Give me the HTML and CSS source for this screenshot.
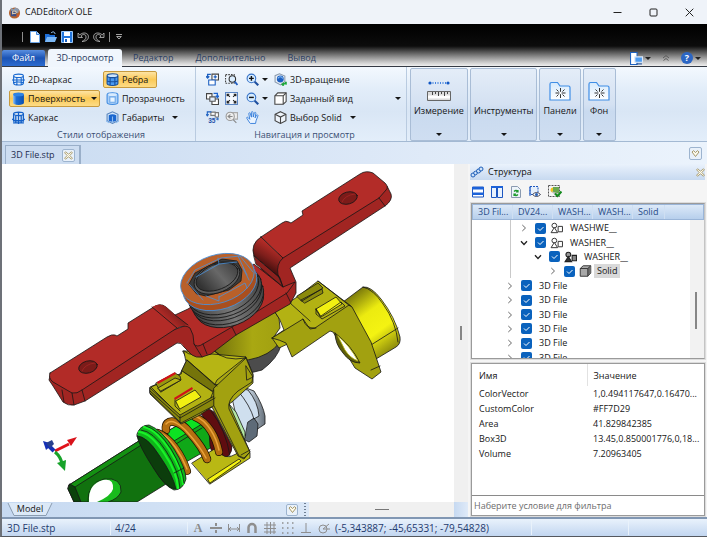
FILE: index.html
```html
<!DOCTYPE html>
<html lang="ru">
<head>
<meta charset="utf-8">
<title>CADEditorX OLE</title>
<link rel="stylesheet" href="styles.css">
</head>
<body>
<svg class="defs" aria-hidden="true">
  <defs>
    <linearGradient id="blueFill" x1="0" x2="1"><stop offset="0" stop-color="#8fc1f5"/><stop offset=".3" stop-color="#1d6fd6"/><stop offset="1" stop-color="#0a4fb0"/></linearGradient>
    <linearGradient id="folderFill" x1="0" y1="0" x2="0" y2="1"><stop offset="0" stop-color="#d6eafc"/><stop offset="1" stop-color="#fff"/></linearGradient>
    <symbol id="cyl-wire" viewBox="0 0 12 12"><path d="M1.500 2.500v7c0 .9 2 1.600 4.500 1.600s4.500-.7 4.500-1.600v-7M1.500 2.500C1.500 1.600 3.500 1 6 1s4.500.6 4.500 1.500S8.500 4.200 6 4.200 1.500 3.400 1.500 2.500M4.500 4v7M8.500 4v7M0 6.500h12M1.500 9.200C3 8 9 8 10.500 9.200" fill="none" stroke="#1667cf"/></symbol>
    <symbol id="cyl-dense" viewBox="0 0 12 12"><path d="M1.500 2.500v7.500M3.500 4v7.500M6 1v11M8.500 4v7.500M10.500 2.500v7.500M1.500 2.500C1.500 1.600 3.500 1 6 1s4.500.6 4.500 1.500S8.500 4.200 6 4.200 1.500 3.400 1.500 2.500M0 7.500l3 1.500h6l3-1.500M1 11h10" fill="none" stroke="#1360c8" stroke-width="1.200"/></symbol>
    <symbol id="cyl-edge" viewBox="0 0 12 12"><path d="M1 2.500v7.300C1 11 3 11.500 6 11.500s5-.5 5-1.700V2.500z" fill="#4b9af0"/><ellipse cx="6" cy="2.400" rx="5" ry="1.800" fill="#cfe6fb"/><path d="M1 2.500v7.300C1 11 3 11.500 6 11.500s5-.5 5-1.700V2.500M1 2.500C1 1.400 3 .7 6 .7s5 .7 5 1.800-2 1.800-5 1.800-5-.7-5-1.800M3.800 4.200v7M8.200 4.200v7M1 7.300c3 1 7 1 10 0" fill="none" stroke="#164f9c"/></symbol>
    <symbol id="cyl-solid" viewBox="0 0 12 12"><path d="M1 2.200v7.800C1 11.200 3 12 6 12s5-.8 5-2V2.200z" fill="url(#blueFill)"/><ellipse cx="6" cy="2.200" rx="5" ry="1.700" fill="#2f83e3"/></symbol>
    <symbol id="cyl-glass" viewBox="0 0 12 12"><path d="M1 2.500v7C1 10.700 3 11.500 6 11.500s5-.8 5-2v-7C11 1.400 9 .7 6 .7S1 1.400 1 2.500z" fill="#a9cff8" stroke="#3f8be0"/><path d="M3.500 4.500h5v5h-5z" fill="#e8f4ff" stroke="#6ba6e8"/><ellipse cx="6" cy="2.500" rx="4" ry="1.300" fill="#d9ebfd"/></symbol>
    <symbol id="bounds" viewBox="0 0 12 12"><path d="M1 3l5-2.200L11 3v6l-5 2.500L1 9z" fill="#d5e8fb" stroke="#5a86bd"/><path d="M2.500 4q3.500-2 7 0v5q-3.500 2-7 0z" fill="#1a66cf"/><path d="M6 5v6M0 9l3 2M12 9l-3 2" stroke="#8dbcf0" fill="none"/></symbol>
    <symbol id="rot-a" viewBox="0 0 12 12"><path d="M5.500 1h6v5.500h-6z" fill="#fff" stroke="#444"/><path d="M2.500 6.500h6v4.500h-6z" fill="#fff" stroke="#1c5fc0"/><path d="M4.500 1.200H1.500V4M0 3l1.500 1.600L3 3M8.500 2v3M10 3.500H7" fill="none" stroke="#1c5fc0" stroke-width="1.200"/></symbol>
    <symbol id="rot-b" viewBox="0 0 12 12"><path d="M.5 1.500h5v5h-5zM5.500 6.500h6v5h-6z" fill="#fff" stroke="#444"/><path d="M3.500 4.500h5v4h-5z" fill="#e4f0fd" stroke="#555"/><path d="M7 1.200h3.500V4M9 3.500l1.500 1.600L12 3.500" fill="none" stroke="#1c64d0" stroke-width="1.200"/></symbol>
    <symbol id="rot-c" viewBox="0 0 12 12"><path d="M4.500 1h4v3h-4zM8.500 1.500h3v4h-3z" fill="#fff" stroke="#777"/><path d="M5 .8H1.200V4M0 3l1.200 1.500L2.500 3M11 6.500v2" fill="none" stroke="#1c5fc0"/><text x="2" y="11.500" class="deg">35°</text></symbol>
    <symbol id="zoom-win" viewBox="0 0 12 12"><path d="M.5 1.500h8v8h-8z" fill="none" stroke="#444" stroke-dasharray="1.500 1"/><circle cx="6.800" cy="5.500" r="3" fill="#dbeeff" stroke="#333"/><path d="M9 8l2.500 3" stroke="#1e5cc0" stroke-width="1.600"/></symbol>
    <symbol id="zoom-fit" viewBox="0 0 12 12"><path d="M.5.500h11v11H.5z" fill="#f4f8fe" stroke="#5c86c4"/><path d="M2.200 2.200l2.300 2.300M9.800 2.200L7.500 4.500M2.200 9.800l2.300-2.300M9.800 9.800L7.500 7.500M2 4V2h2M8 2h2v2M2 8v2h2M8 10h2V8" fill="none" stroke="#222"/></symbol>
    <symbol id="zoom-prev" viewBox="0 0 12 12"><path d="M6.500 1.500h5v6h-5z" fill="#eee" stroke="#aaa"/><circle cx="4.800" cy="5" r="3.800" fill="#eee" stroke="#999"/><path d="M2.500 5h4.500M5 3.200L2.800 5 5 6.800M7.500 8l3 3" fill="none" stroke="#888"/></symbol>
    <symbol id="zoom-in" viewBox="0 0 12 12"><circle cx="5" cy="5" r="4" fill="#d6ecff" stroke="#3471c8"/><path d="M2.800 5h4.400M5 2.800v4.400" stroke="#111" stroke-width="1.300"/><path d="M8 8l3.300 3.300" stroke="#1e4f9e" stroke-width="2"/></symbol>
    <symbol id="zoom-out" viewBox="0 0 12 12"><circle cx="5" cy="5" r="4" fill="#d6ecff" stroke="#3471c8"/><path d="M2.800 5h4.400" stroke="#111" stroke-width="1.300"/><path d="M8 8l3.300 3.300" stroke="#1e4f9e" stroke-width="2"/></symbol>
    <symbol id="hand" viewBox="0 0 12 12"><path d="M3.500 11L.8 6.800c-.6-1 .6-1.500 1.300-.6L3.500 7.700 2.600 2.500c-.2-1 1.100-1.200 1.400-.2l1 3.400V1.300c0-1 1.400-1 1.500 0l.2 4.300 1-3.800c.3-1 1.600-.6 1.400.3l-.7 4.200 1.300-2.400c.5-.8 1.600-.3 1.300.6L9.300 9 8.800 11.500H4z" fill="#eaf4ff" stroke="#2a76d8" stroke-width=".8"/></symbol>
    <symbol id="orbit" viewBox="0 0 12 12"><path d="M5 .8l5 2v5L6 11 1 8.200V2.500z" fill="#eef3f9" stroke="#8b9bae"/><circle cx="5.800" cy="5.500" r="3.200" fill="#1d5fc0"/><path d="M3.500 5c1.500-2 3.500-2 4.500 0" stroke="#8cc3f8" fill="none"/><path d="M8 11.500l.8-1.800 2.200.3V8M7 10l2 1.700" stroke="#1ea83a" stroke-width="1.600" fill="none"/></symbol>
    <symbol id="box" viewBox="0 0 12 12"><path d="M.8 3.500L3.500.8h7.700v8L8.500 11.300H.8z" fill="#fff" stroke="#444"/><path d="M.8 3.500h7.700v7.800M8.500 3.500L11.200.8" fill="none" stroke="#444"/></symbol>
    <symbol id="iso" viewBox="0 0 12 12"><path d="M6 .6l5 2.400v6L6 11.500 1 9V3z" fill="#eef4fb" stroke="#444"/><path d="M1 3l5 2.600L11 3M6 5.600v6" fill="none" stroke="#444"/></symbol>
    <symbol id="folder" viewBox="0 0 22 20"><path d="M1 19V3q0-1.500 1.500-1.500h6L11 5h8.500Q21 5 21 6.500V19z" fill="url(#folderFill)" stroke="#3f8ee6" stroke-width="1.200"/><path d="M11.500 7v10M6.500 12h10M7.500 8.500l2 2M15.500 8.500l-2 2M7.500 15.500l2-2M15.500 15.500l-2-2" stroke="#333"/><circle cx="11.500" cy="12" r="1.200" fill="#fff"/></symbol>
    <symbol id="ruler" viewBox="0 0 24 20"><path d="M3 2h18" stroke="#1464d8" stroke-dasharray="1 1.500" stroke-width="1.500"/><circle cx="3" cy="2" r="1.600" fill="#0f56c4"/><circle cx="21" cy="2" r="1.600" fill="#0f56c4"/><path d="M.5 10.500h23v9H.5z" fill="#dcdcdc" stroke="#666"/><path d="M1 16h22" stroke="#fff" stroke-width="3"/><path d="M5.500 11v3M8.500 11v2M11.500 11v4M14.500 11v2M17.500 11v4M20.500 11v2" stroke="#444"/></symbol>
    <symbol id="caret" viewBox="0 0 6 3"><path d="M0 0h6L3 3z" fill="currentColor"/></symbol>
    <symbol id="cross" viewBox="0 0 9 9"><path d="M1.500.8l3 2.400 3-2.400.9 1L5.800 4.500l2.600 2.700-.9 1-3-2.400-3 2.400-.9-1 2.600-2.700L.6 1.800z" fill="#fffdf0" stroke="#9b8a58" stroke-width=".8"/></symbol>
    <symbol id="heart" viewBox="0 0 9 9"><path d="M1 3l1.500-1.300 2 1.800 2-1.800L8 3 4.500 7.500z" fill="#fffdf0" stroke="#9b8a58" stroke-width=".9"/></symbol>
    <symbol id="chev-r" viewBox="0 0 8 8"><path d="M2.300 1l3.200 3-3.200 3" fill="none" stroke="#666"/></symbol>
    <symbol id="chev-d" viewBox="0 0 8 8"><path d="M1 2.300l3 3.200 3-3.200" fill="none" stroke="#222" stroke-width="1.300"/></symbol>
    <symbol id="asm" viewBox="0 0 12 10"><circle cx="4" cy="2.800" r="2.200" fill="#fff" stroke="#333" stroke-width=".9"/><path d="M4 4.500L7 9.300H1z" fill="#fff" stroke="#333" stroke-width=".9"/><path d="M7.500 3.500h4v5h-4z" fill="#fff" stroke="#333" stroke-width=".9"/></symbol>
    <symbol id="asm-dark" viewBox="0 0 12 10"><circle cx="4" cy="2.800" r="2.200" fill="#999" stroke="#222"/><path d="M4 4.500L7 9.300H1z" fill="#333" stroke="#222"/><path d="M7.500 3.500h4v5h-4z" fill="#888" stroke="#222"/></symbol>
    <symbol id="solid" viewBox="0 0 13 13"><path d="M.8 3.800L4 .8h8.200v8l-3.200 3.400H.8z" fill="#a8a8a8" stroke="#333"/><path d="M9 3.800V12l3.200-3.200v-8z" fill="#6d6d6d"/><path d="M.8 3.800H9v8.400M9 3.800l3.200-3" fill="none" stroke="#333"/></symbol>
  </defs>
</svg>

<div class="window">
  <header class="titlebar">
    <svg class="logo" viewBox="0 0 14 14"><circle cx="7" cy="7.500" r="6" fill="#b5632e"/><path d="M3 1.500l3 2 2-2 4 2-1 4-8 1z" fill="#8a98ad"/><path d="M3 5h4l2 2v4H3z" fill="#3e4f86"/><path d="M5 9V5.500h2.500q1.500 0 1.500 1.300T7.500 8H5" stroke="#f0d8b0" fill="none"/><path d="M9 10l3-1-1 3z" fill="#d8542c"/></svg>
    <h1>CADEditorX OLE</h1>
    <div class="winbtns">
      <button aria-label="Свернуть"><svg viewBox="0 0 9 9"><path d="M.5 4.500h8"/></svg></button>
      <button aria-label="Развернуть"><svg viewBox="0 0 9 9"><rect x="1" y="1" width="7" height="7" rx="1"/></svg></button>
      <button aria-label="Закрыть"><svg viewBox="0 0 9 9"><path d="M.7.700l7.600 7.600M8.300.7L.7 8.300"/></svg></button>
    </div>
  </header>

  <div class="ribbonhead">
    <div class="quick">
      <i class="bar"></i>
      <button aria-label="Создать"><svg viewBox="0 0 12 12"><path d="M1.500.500h6l3 3v8h-9z" fill="#fff" stroke="#6fa8ea"/><path d="M7.500.500v3h3" fill="#bcd9f8" stroke="#3c82d8"/></svg></button>
      <button aria-label="Открыть"><svg viewBox="0 0 12 12"><path d="M0 11V3h4l1 1h5v7z" fill="#1e6fd8"/><path d="M2 6h10l-2 5H0z" fill="#7cb8f5"/><path d="M6 2c2-2 4-1 4 1" stroke="#9fd0ff" fill="none"/></svg></button>
      <button aria-label="Сохранить"><svg viewBox="0 0 12 12"><path d="M.5.500h11v11H.5z" fill="#2376dc" stroke="#9cc8f7"/><path d="M3 1h6v4H3zM3 7h6v5H3z" fill="#fff"/><path d="M4 8h2v3H4z" fill="#1a5fc0"/></svg></button>
      <button aria-label="Отменить"><svg viewBox="0 0 12 12"><path d="M1 2v4.500h4.500L4 5c2-2.500 5-1.500 5 1 0 1.800-1.500 3.500-4 4.500 4 0 6.500-2 6.500-4.800C11.500 2 6.500.5 2.800 3.800z" fill="#1a1a1a" stroke="#bbb" stroke-width=".8"/></svg></button>
      <button aria-label="Вернуть"><svg viewBox="0 0 12 12"><path d="M11 2v4.500H6.500L8 5C6 2.500 3 3.500 3 6c0 1.800 1.500 3.500 4 4.500C3 10.500.5 8.500.5 5.700.5 2 5.500.5 9.200 3.800z" fill="#1a1a1a" stroke="#bbb" stroke-width=".8"/></svg></button>
      <i class="bar"></i>
      <button class="qmore" aria-label="Настройка"><svg viewBox="0 0 6 6"><path d="M0 .5h6M.7 2.500h4.600L3 5z" stroke="#ccc" fill="none" stroke-width=".8"/></svg></button>
    </div>
    <nav class="tabs">
      <button class="file">Файл</button>
      <button class="active">3D-просмотр</button>
      <button>Редактор</button>
      <button>Дополнительно</button>
      <button>Вывод</button>
      <div class="tabtools">
        <button aria-label="Вид"><svg class="s12" viewBox="0 0 12 12"><path d="M.5.500h6v11h-6z" fill="#fff" stroke="#1e62bf"/><path d="M4.500 4.500h7v5h-7z" fill="#4c9bf0" stroke="#dbe8f8"/><path d="M6 11h5" stroke="#1c4e98"/></svg><svg class="caret"><use href="#caret"/></svg></button>
        <button aria-label="Свернуть ленту"><svg class="fold" viewBox="0 0 8 6"><path d="M1 3l3-2.400L7 3M1.500 5.500L4 3.500l2.500 2" fill="none" stroke="#555" stroke-width=".9"/></svg></button>
        <button class="help" aria-label="Справка"><span>?</span><svg class="caret"><use href="#caret"/></svg></button>
      </div>
    </nav>
  </div>

  <section class="ribbon">
    <div class="group">
      <div class="styles">
        <button><svg class="s12"><use href="#cyl-wire"/></svg>2D-каркас</button>
        <button class="on"><svg class="s12"><use href="#cyl-edge"/></svg>Ребра</button>
        <button class="on"><svg class="s12"><use href="#cyl-solid"/></svg>Поверхность<svg class="caret"><use href="#caret"/></svg></button>
        <button><svg class="s12"><use href="#cyl-glass"/></svg>Прозрачность</button>
        <button><svg class="s12"><use href="#cyl-dense"/></svg>Каркас</button>
        <button><svg class="s12"><use href="#bounds"/></svg>Габариты<svg class="caret"><use href="#caret"/></svg></button>
      </div>
      <p>Стили отображения</p>
    </div>
    <div class="group view">
      <div class="viewgrid">
        <button aria-label="Повернуть влево"><svg class="s12"><use href="#rot-a"/></svg></button>
        <button aria-label="Окно"><svg class="s12"><use href="#zoom-win"/></svg></button>
        <button aria-label="Увеличить"><svg class="s12"><use href="#zoom-in"/></svg><svg class="caret"><use href="#caret"/></svg></button>
        <button><svg class="s12"><use href="#orbit"/></svg>3D-вращение</button>
        <button aria-label="Повернуть вправо"><svg class="s12"><use href="#rot-b"/></svg></button>
        <button aria-label="Вписать"><svg class="s12"><use href="#zoom-fit"/></svg></button>
        <button aria-label="Уменьшить"><svg class="s12"><use href="#zoom-out"/></svg><svg class="caret"><use href="#caret"/></svg></button>
        <button class="wide"><svg class="s12"><use href="#box"/></svg>Заданный вид<svg class="caret"><use href="#caret"/></svg></button>
        <button aria-label="Повернуть на 35°"><svg class="s12"><use href="#rot-c"/></svg></button>
        <button aria-label="Предыдущий вид"><svg class="s12"><use href="#zoom-prev"/></svg></button>
        <button aria-label="Рука"><svg class="s12"><use href="#hand"/></svg></button>
        <button class="pick"><svg class="s12"><use href="#iso"/></svg>Выбор Solid<svg class="caret"><use href="#caret"/></svg></button>
      </div>
      <p>Навигация и просмотр</p>
    </div>
    <div class="bigs">
      <button class="big"><svg class="pic"><use href="#ruler"/></svg><span>Измерение</span><svg class="caret"><use href="#caret"/></svg></button>
      <button class="big"><svg class="pic"></svg><span>Инструменты</span><svg class="caret"><use href="#caret"/></svg></button>
      <button class="big"><svg class="pic"><use href="#folder"/></svg><span>Панели</span><svg class="caret"><use href="#caret"/></svg></button>
      <button class="big"><svg class="pic"><use href="#folder"/></svg><span>Фон</span><svg class="caret"><use href="#caret"/></svg></button>
    </div>
  </section>

  <div class="docs">
    <div class="doctab"><span>3D File.stp</span><button class="sq" aria-label="Закрыть файл"><svg><use href="#cross"/></svg></button></div>
    <button class="sq" aria-label="Список файлов"><svg><use href="#heart"/></svg></button>
  </div>

  <main class="work">
    <section class="viewport">
      <div class="canvas">
        <svg viewBox="2 164 452 338" preserveAspectRatio="xMinYMin meet" role="img" aria-label="3D-модель">
          <defs>
            <linearGradient id="steel" x1="0" x2="1"><stop offset="0" stop-color="#3e3e3e"/><stop offset=".5" stop-color="#777"/><stop offset="1" stop-color="#444"/></linearGradient>
            <linearGradient id="bore" x1="0" x2="1" y1=".2"><stop offset="0" stop-color="#333"/><stop offset=".5" stop-color="#686868"/><stop offset="1" stop-color="#3a3a3a"/></linearGradient>
            <linearGradient id="hub" x1="0" x2="1"><stop offset="0" stop-color="#6c6b0b"/><stop offset=".6" stop-color="#a9a812"/><stop offset="1" stop-color="#a1a010"/></linearGradient>
            <linearGradient id="drum" gradientUnits="userSpaceOnUse" x1="350" y1="295" x2="392" y2="352"><stop offset="0" stop-color="#77760b"/><stop offset=".35" stop-color="#eceb10"/><stop offset=".65" stop-color="#f4f312"/><stop offset="1" stop-color="#86850b"/></linearGradient>
            <linearGradient id="bend" gradientUnits="userSpaceOnUse" x1="272" y1="247" x2="260" y2="266"><stop offset="0" stop-color="#b02b26"/><stop offset=".5" stop-color="#7e1e1b"/><stop offset="1" stop-color="#3a0d0c"/></linearGradient>
            <linearGradient id="bend2" gradientUnits="userSpaceOnUse" x1="166" y1="320" x2="178" y2="308"><stop offset="0" stop-color="#b22b27"/><stop offset="1" stop-color="#6e1a18"/></linearGradient>
            <linearGradient id="nut" x1="0" x2="1"><stop offset="0" stop-color="#d5e3f0"/><stop offset="1" stop-color="#66707a"/></linearGradient>
          </defs>
          <g stroke-linejoin="round" stroke-linecap="round" stroke-width=".8" stroke="#161616">
            <!-- bolt head and washer behind the bracket -->
            <path d="M246 388L254 391Q263 405 265 416V424L256 430L246 410z" fill="url(#nut)"/>
            <path d="M232 396L243 389L248 390Q258 402 259 416L252 420L247 436L240 432z" fill="#cfdfee"/>
            <path d="M248 422L254 418L258 424L257 436L249 442L245 440z" fill="#5e6b78"/>
            <path d="M229 404L236 412L245 432V438L241 443L234 436z" fill="#b4e6a2"/>
            <path d="M238 391Q250 405 254 419" fill="none"/>
            <!-- green shaft -->
            <path d="M165 433L195 415L214 440V446L186 462z" fill="#10a818"/>
            <path d="M166 432L194 416L202 424L174 441z" fill="#0ce222"/>
            <path d="M176 444L202 428" fill="none"/>
            <!-- dark red ring -->
            <path d="M200 412Q207 406 214 412L232 446Q232 458 220 459Q212 456 210 446Q210 425 200 412z" fill="#5f0d10"/>
            <path d="M211 411Q226 430 230 456" fill="none"/>
            <!-- lower lip of the bracket -->
            <path d="M192 463L216 448Q224 462 236 454L247 446L250 453V458L210 484z" fill="#b9b814"/>
            <path d="M208 479L239 459L241 461L210 483z" fill="#f4f312"/>
            <!-- springs -->
            <g fill="none">
              <path d="M195 417C208 422 216 437 219 452" stroke="#1c1204" stroke-width="8"/><path d="M195 417C208 422 216 437 219 452" stroke="#b56f11" stroke-width="6.600"/><path d="M195 416C208 421 216 437 219 450" stroke="#e9a23a" stroke-width="1.500"/>
              <path d="M166 430C164 417 180 420 190 433C198 442 205 453 207 459" stroke="#1c1204" stroke-width="8.500"/><path d="M166 430C164 417 180 420 190 433C198 442 205 453 207 459" stroke="#b56f11" stroke-width="7"/><path d="M166 424C171 418 180 424 188 433C196 442 203 452 206 458" stroke="#e9a23a" stroke-width="1.500"/>
              <path d="M158 433C171 438 182 456 187 471" stroke="#1c1204" stroke-width="8"/><path d="M158 433C171 438 182 456 187 471" stroke="#b56f11" stroke-width="6.600"/><path d="M158 432C171 437 182 456 187 469" stroke="#e9a23a" stroke-width="1.500"/>
            </g>
            <!-- green plate and collar -->
            <path d="M69 485L142 439L166 484L137 502H74L68 489z" fill="#11720f"/>
            <path d="M69 485L142 439L146 442L75 487z" fill="#149112"/>
            <path d="M70 484L75 487L81 502H74L68 489z" fill="#0b420b"/>
            <path d="M88 502Q87 483 104 479Q122 477 121 492Q118 499 108 502z" fill="#18bb1c"/>
            <path d="M89 502Q88 484 103 480Q114 478 113 489Q111 496 97 502z" fill="#fff" stroke="none"/>
            <path d="M137 434Q140 425 149 425Q162 430 174 449Q186 468 186 479Q183 490 174 490Q164 486 154 468z" fill="#0fb51a"/>
            <path d="M137 436Q147 436 159 455Q173 475 176 489Q166 489 154 469Q139 446 137 436z" fill="#0c3d0c"/>
            <path d="M139 432Q151 433 164 453Q177 472 178 488M144 427Q157 430 170 451Q182 470 183 484" fill="none" stroke="#19f128" stroke-width="2.200"/>
            <path d="M141 430Q153 431 166 451Q179 471 180 488M146 426Q158 429 171 449Q183 469 184 483M174 473L184 468" fill="none"/>
            <!-- central hub -->
            <path d="M248 357L281 338V345Q278 358 262 370L250 373z" fill="#4c4c4c"/>
            <path d="M211 352Q222 364 248 360Q270 356 280 342L273 338L280 328L279 318L274 311L262 316z" fill="url(#hub)"/>
            <!-- right wing of the bracket -->
            <path d="M343 302L363 287Q371 286 381 299Q395 317 400 337Q401 344 396 347L376 359L350 330z" fill="url(#drum)"/>
            <path d="M363 287Q373 289 383 304Q396 322 398 342M371 345L398 328" fill="none"/>
            <path d="M275 312L297 297L318 281L343 300L351 306L353 311L348 314L335 322L279 348L272 338L284 330Q280 318 275 312z" fill="#b3b213"/>
            <path d="M272 338L303 319Q306 329 315 328L349 305L352 307L371 342L381 372L372 379L355 368L333 332L330 331L292 357L286 343Q280 340 272 338z" fill="#a2a110"/>
            <path d="M335 333Q351 345 360 363Q350 363 343 353Q335 344 335 333z" fill="#5f5f08"/>
            <path d="M338 336Q350 346 358 361Q350 358 345 350z" fill="#fff" stroke="#bab90f"/>
            <path d="M297 296L318 283L323 288L302 301zM301 300L322 289L323 293L305 303z" fill="#8b8a0c"/>
            <path d="M316 309L336 297L342 304L321 317z" fill="#f1f012"/>
            <path d="M316 309V314L322 319L345 306L341 302L321 316zM318 281L350 306M303 319L310 329L316 328M290 303L310 321M371 370L380 366" fill="none"/>
            <!-- left part of the bracket -->
            <path d="M183 351Q203 351 213 350Q228 363 246 357L253 374V383L232 402L229 404L250 452L244 459L238 456L212 407L198 416L181 424L150 394V387L180 374L187 360z" fill="#a9a812"/>
            <path d="M184 351Q192 358 212 354L246 357L217 380L213 388L186 361z" fill="#b6b514"/>
            <path d="M187 360L215 385Q220 383 221 388Q217 392 212 391L182 371z" fill="#75740a"/>
            <path d="M182 371L213 392L210 400L180 416L151 387L181 374z" fill="#b3b213"/>
            <path d="M150 388L180 415L216 395L219 403L181 423L150 393z" fill="#88870c"/>
            <path d="M214 388L246 358L253 375L252 382L238 391Q227 400 229 409L250 452L244 458L239 456L214 406z" fill="#a2a110"/>
            <path d="M246 366L253 377L247 380zM150 391L180 418L215 398M187 360L217 386M180 422V416M241 455L250 450" fill="none"/>
            <path d="M156 383L175 373L180 376L181 380L161 392z" fill="#98970e"/><path d="M158 388L175 378L181 380L161 391z" fill="#b5b414"/><path d="M157 382L175 372L176 374L158 384z" fill="#d01418" stroke="none"/>
            <path d="M176 401L195 390L201 397L180 409z" fill="#f1f012"/><path d="M174 398L192 387L193 389L175 400z" fill="#d01418" stroke="none"/><path d="M175 400V406L180 411" fill="none"/>
            <path d="M213 350Q224 362 246 358" fill="none"/>
            <!-- red lever: side faces -->
            <path d="M50 376L49 380L53 386L63 402Q68 406 74 405L85 401L177 343Q181 342 184 347L192 355Q196 358 202 357L211 354L236 335L290 304L296 293V282L290 268L385 206Q393 200 391 194L387 186L283 250L200 320z" fill="#a12522"/>
            <!-- red lever: top faces -->
            <path d="M50 373L107 337Q112 334 115 335L117 336L128 329V323L152 308Q160 302 166 307L175 315L188 309L254 264L283 287L295 282L287 293L232 327L203 344Q197 348 194 344Q194 334 190 328Q185 324 177 328L82 390Q77 394 72 393L53 382Q48 378 50 373z" fill="#b22b27"/>
            <path d="M152 307Q160 302 166 307L175 315L188 325Q182 324 177 328z" fill="url(#bend2)" stroke="none"/>
            <path d="M261 237L282 223Q286 220 289 222L291 223L303 215L302 211L360 174Q366 170 373 173L385 183Q389 187 386 190L379 198L283 258z" fill="#b32c28"/>
            <path d="M261 237L283 258Q276 264 278 275L280 278L254 256Q250 244 261 237z" fill="url(#bend)"/>
            <path d="M254 256L280 278L283 287L256 264z" fill="#8d211e"/>
            <path d="M152 307L177 328M175 315L188 325M194 344L202 357M203 344L207 354M232 327L236 335M286 293L291 303M82 390L85 401M379 198L385 206M72 393L74 405M62 390L64 402M278 275L283 287" fill="none"/>
            <ellipse cx="348" cy="198" rx="9.500" ry="6" transform="rotate(-15 348 198)" fill="#7c1b19"/><path d="M342 202Q345 195 355 194" fill="none" stroke="#a42624"/>
            <ellipse cx="88" cy="367" rx="9.500" ry="6" transform="rotate(-15 88 367)" fill="#7c1b19"/><path d="M82 371Q85 364 95 363" fill="none" stroke="#a42624"/>
            <!-- threaded bushing -->
            <g fill="url(#steel)">
              <ellipse cx="229" cy="302" rx="36" ry="24" transform="rotate(-20 229 302)"/>
              <ellipse cx="228" cy="299" rx="37" ry="24" transform="rotate(-20 228 299)"/>
              <ellipse cx="226" cy="295" rx="37" ry="24" transform="rotate(-20 226 295)"/>
              <ellipse cx="225" cy="292" rx="38" ry="24" transform="rotate(-20 225 292)"/>
              <ellipse cx="223" cy="289" rx="37" ry="24" transform="rotate(-20 223 289)"/>
            </g>
            <ellipse cx="220" cy="285" rx="38" ry="24" transform="rotate(-18 220 285)" fill="#a94f1f" stroke="#4a90d9"/>
            <ellipse cx="217.500" cy="279" rx="38" ry="24" transform="rotate(-18 217.500 279)" fill="#b9602a" stroke="#4a90d9"/>
            <path d="M189 284L195 273L222 259L237 261L242 270L241 281L229 290L206 296L197 294z" fill="#3b3b3b"/>
            <ellipse cx="217" cy="278" rx="24" ry="14.500" transform="rotate(-22 217 278)" fill="#5c5c5c"/>
            <ellipse cx="217" cy="277" rx="22" ry="12.500" transform="rotate(-22 217 277)" fill="url(#bore)"/>
            <path d="M187 283L195 270L221 258L240 256L253 272M189 284L203 300M206 296L219 301V296M219 297L245 283L247 288M196 277L219 264L218 258M219 264L237 262M243 268L249 280M238 256L247 275" fill="none" stroke="#4a90d9"/>
          </g>
          <!-- axis marker -->
          <g stroke-width="3" fill="none"><path d="M55 451l14-7" stroke="#e0121b"/><path d="M55 452q6 5 7 12" stroke="#17a32a"/><path d="M54 451l-5-5" stroke="#1530b5" stroke-width="4"/></g>
          <path d="M77 437l-10 3 4 6z" fill="#d9131b"/><path d="M65 471l1-11-9 3z" fill="#17a32a"/><path d="M43 441l3 9 7-6z" fill="#1530b5"/><path d="M46 443l6-3 2 4-4 4z" fill="#27408f"/>
        </svg>
      </div>
      <div class="vscroll"><i></i></div>
      <div class="sheet">
        <div class="modeltab"><svg viewBox="0 0 46 13"><path d="M1 0l6 12.500h32L45 0" fill="#dce9f7" stroke="#8a9cb0"/></svg><button>Model</button></div>
        <button class="sq" aria-label="Список листов"><svg><use href="#heart"/></svg></button>
        <i class="grip"></i>
        <div class="hscroll"><i></i></div>
      </div>
      <div class="corner"></div>
    </section>

    <aside class="side">
      <header>
        <svg class="dna" viewBox="0 0 14 12"><g fill="#cfe3fa" stroke="#1f5fb8"><circle cx="3" cy="9" r="2"/><circle cx="5.500" cy="7" r="1.800"/><circle cx="8.500" cy="5" r="2"/><circle cx="11" cy="3" r="2"/></g></svg>
        <h2>Структура</h2>
        <button aria-label="Закрыть панель"><svg><use href="#cross"/></svg></button>
      </header>
      <div class="sidetools">
        <button aria-label="Горизонтально"><svg viewBox="0 0 12 12"><path d="M.5 1h11v10H.5z" fill="#fff" stroke="#1d57c0"/><path d="M0 1h12v2.500H0zM0 6.500h12V9H0z" fill="#1d62d8"/></svg></button>
        <button aria-label="Вертикально"><svg viewBox="0 0 12 12"><path d="M.5.500h5v11h-5zM6.500.500h5v11h-5z" fill="#eaf3fd" stroke="#1d57c0"/><path d="M0 0h12v2H0z" fill="#1d62d8"/></svg></button>
        <button aria-label="Обновить"><svg viewBox="0 0 12 12"><path d="M1.500.500h6l3 3v8h-9z" fill="#eef4fb" stroke="#8a9ab0"/><path d="M4 5.500q2-2 4 0M8 4v2H6M8 8.500q-2 2-4 0M4 10V8h2" fill="none" stroke="#1c9a2a" stroke-width="1.200"/></svg></button>
        <button aria-label="Показать"><svg viewBox="0 0 12 12"><path d="M1 .5h8v8H1z" fill="#e5effb" stroke="#1d57c0" stroke-dasharray="2 1"/><path d="M1 10V1" stroke="#1d57c0"/><path d="M3.500 8.500Q7.500 4.500 11.500 8.500 7.500 12.500 3.500 8.500z" fill="#fff" stroke="#445"/><circle cx="7.500" cy="8.500" r="1.500" fill="#2a62b8"/></svg></button>
        <button aria-label="Выделить"><svg class="s13" viewBox="0 0 14 13"><path d="M.5.500h11v11H.5z" fill="none" stroke="#555" stroke-dasharray="2 1"/><circle cx="5" cy="5" r="2.500" fill="#f3c21b"/><path d="M5 2h6v6H5z" fill="#69a84f"/><path d="M3 6l4 4 5-1" fill="#bbb"/><path d="M7 8.500l2.500 2.500 4-4.500" fill="none" stroke="#128a1c" stroke-width="2"/></svg></button>
      </div>
      <div class="treebox">
        <div class="crumbs"><button>3D Fil...</button><button>DV24...</button><button>WASH...</button><button>WASH...</button><button>Solid</button></div>
        <div class="treewrap">
          <ul class="tree">
            <li class="l1"><svg class="ch"><use href="#chev-r"/></svg><label><input type="checkbox" checked><svg class="ti"><use href="#asm"/></svg><span>WASHWE__</span></label></li>
            <li class="l1"><svg class="ch"><use href="#chev-d"/></svg><label><input type="checkbox" checked><svg class="ti"><use href="#asm"/></svg><span>WASHER__</span></label></li>
            <li class="l2"><svg class="ch"><use href="#chev-d"/></svg><label><input type="checkbox" checked><svg class="ti"><use href="#asm-dark"/></svg><span>WASHER__</span></label></li>
            <li class="l3"><svg class="ch"><use href="#chev-r"/></svg><label><input type="checkbox" checked><svg class="ti"><use href="#solid"/></svg><span class="sel">Solid</span></label></li>
            <li><svg class="ch"><use href="#chev-r"/></svg><label><input type="checkbox" checked><span>3D File</span></label></li>
            <li><svg class="ch"><use href="#chev-r"/></svg><label><input type="checkbox" checked><span>3D File</span></label></li>
            <li><svg class="ch"><use href="#chev-r"/></svg><label><input type="checkbox" checked><span>3D File</span></label></li>
            <li><svg class="ch"><use href="#chev-r"/></svg><label><input type="checkbox" checked><span>3D File</span></label></li>
            <li><svg class="ch"><use href="#chev-r"/></svg><label><input type="checkbox" checked><span>3D File</span></label></li>
            <li><svg class="ch"><use href="#chev-r"/></svg><label><input type="checkbox" checked><span>3D File</span></label></li>
          </ul>
          <div class="treescroll"><i></i></div>
        </div>
      </div>
      <div class="props">
        <table>
          <thead><tr><th>Имя</th><th>Значение</th></tr></thead>
          <tbody>
            <tr><td>ColorVector</td><td>1,0.494117647,0.16470...</td></tr>
            <tr><td>CustomColor</td><td>#FF7D29</td></tr>
            <tr><td>Area</td><td>41.829842385</td></tr>
            <tr><td>Box3D</td><td>13.45,0.850001776,0,18...</td></tr>
            <tr><td>Volume</td><td>7.20963405</td></tr>
          </tbody>
        </table>
        <input type="text" aria-label="Фильтр" placeholder="Наберите условие для фильтра">
      </div>
    </aside>
  </main>

  <footer class="status">
    <span class="sfile">3D File.stp</span>
    <span class="scount">4/24</span>
    <div class="sicons">
      <button class="letter" aria-label="Текст">A</button>
      <button aria-label="Толщина"><svg viewBox="0 0 12 12"><path d="M0 6h12M6 1v3M6 8v3" stroke-width="2"/></svg></button>
      <button aria-label="Размер"><svg viewBox="0 0 12 12"><path d="M.5 2v8M11.500 2v8M1 7h10M3 5L1 7l2 2M9 5l2 2-2 2"/></svg></button>
      <button aria-label="Привязка"><svg viewBox="0 0 12 12"><path d="M2.500 11V5.500a3.500 3.500 0 017 0V11" stroke-width="2.500"/></svg></button>
      <button aria-label="Сетка"><svg viewBox="0 0 12 12"><path d="M3 0v12M6.500 0v12M10 0v12M0 3h12M0 6.500h12M0 10h12"/></svg></button>
      <button aria-label="Шаг"><svg viewBox="0 0 12 12"><path d="M0 1h12M0 6h12M0 11h12" stroke-width="1.500" stroke-dasharray="1.500 3.500"/></svg></button>
      <button aria-label="Орто"><svg viewBox="0 0 12 12"><path d="M1 10.500h10M6 1v9.500"/></svg></button>
      <button aria-label="Полярная"><svg viewBox="0 0 12 12"><circle cx="5" cy="7" r="4"/><path d="M5 7l6-5M5 7h7"/></svg></button>
    </div>
    <span class="coords">(-5,343887; -45,65331; -79,54828)</span>
    <span class="cell"></span>
    <span class="cell last"></span>
  </footer>
</div>
</body>
</html>
```
FILE: styles.css
```css
* { box-sizing: border-box; }

body {
  margin: 0;
  font-family: "Open Sans", "Noto Sans", sans-serif;
  font-size: 9px;
  line-height: 14px;
  color: #161616;
}

h1, h2, p, ul { margin: 0; padding: 0; font-size: 9px; font-weight: 400; }
button, input { font: inherit; color: inherit; margin: 0; }
button { display: flex; align-items: center; padding: 0; border: 0; background: none; }
svg { display: block; flex: none; }
i { display: block; }

.defs { position: absolute; width: 0; height: 0; }
.deg { font: bold 6px "Liberation Sans", sans-serif; fill: #1c4fa8; }
.s12 { width: 13px; height: 13px; }
.caret { width: 6px; height: 3px; }

.window {
  display: flex;
  flex-direction: column;
  min-height: 100vh;
  border-left: 2px solid #6d7178;
  border-bottom: 1px solid #55585e;
  background: #eff3f9;
}

/* title bar */
.titlebar { display: flex; align-items: center; height: 24px; padding-left: 6px; background: #eff3f9; }
.logo { width: 13px; height: 13px; margin-right: 4px; }
.titlebar h1 { flex: 1; color: #111; }
.winbtns { display: flex; }
.winbtns button { width: 36px; height: 24px; justify-content: center; }
.winbtns svg { width: 9px; height: 9px; fill: none; stroke: #222; }

/* quick access and tabs */
.ribbonhead { background: linear-gradient(#000 0, #0c0c0c 22px, #555 28px, #8f8f8f 33px, #c8c8c8 38px, #efefef 42px); }
.quick { display: flex; align-items: center; gap: 4px; height: 26px; padding-left: 20px; }
.quick button svg { width: 12px; height: 12px; }
.quick .bar { width: 1px; height: 10px; background: #8d8d8d; margin-right: 2px; }
.quick .qmore svg { width: 6px; height: 6px; }
.tabs { display: flex; align-items: stretch; height: 17px; padding-right: 6px; border-bottom: 1px solid #343a44; }
.tabs > button { padding: 0 11px; color: #2c3f63; }
.tabs > .file { width: 43px; padding: 0; justify-content: center; color: #fff; background: linear-gradient(#5a8fe0, #1b53b4 50%, #2c6cd0); border-radius: 2px 2px 0 0; margin-right: 3px; }
.tabs > .active { width: 74px; padding: 0; justify-content: center; margin: -1px 0 -1px 0; background: #f0f6fd; border-radius: 3px 3px 0 0; color: #26385c; }
.tabtools { display: flex; align-items: center; gap: 11px; margin-left: auto; color: #222; }
.tabtools button { gap: 2px; }
.fold { width: 8px; height: 6px; }
.help span { width: 12px; height: 12px; border-radius: 6px; background: #2c66c4; color: #fff; font-weight: 700; line-height: 12px; text-align: center; }

/* ribbon */
.ribbon {
  display: flex;
  height: 75px;
  background: linear-gradient(#f3f8fe 0, #e2edf9 30%, #d9e6f5 60%, #e3eefa 100%);
  border-bottom: 1px solid #a3b9d3;
}
.group { display: flex; flex-direction: column; width: 194px; padding: 4px 0 0 7px; border-right: 1px solid #b9cbe0; }
.group p { padding: 2px 2px 0 0; text-align: center; color: #3b4f74; }
.group.view { width: 211px; padding-left: 9px; margin-right: 3px; }
.styles { display: grid; grid-template-columns: 91px 1fr; grid-auto-rows: 17px; gap: 2px 3px; justify-items: start; }
.styles button, .viewgrid button { gap: 3px; height: 17px; padding: 0 4px 0 2px; border: 1px solid transparent; border-radius: 2px; white-space: nowrap; }
.styles .caret { margin-left: 5px; }
.styles .on { background: linear-gradient(#fde3a3, #fbc956 50%, #fddc86); border-color: #c79a3e; padding-right: 8px; }
.styles .on:nth-child(3) { width: 91px; padding-right: 2px; }
.styles .on .caret { margin-left: auto; }
.viewgrid { display: grid; grid-template-columns: 19px 21px 28px 1fr; grid-auto-rows: 17px; row-gap: 2px; }
.viewgrid button { padding: 0; }
.viewgrid .wide .caret { margin-left: auto; margin-right: 4px; }
.viewgrid .pick .caret { margin-left: 5px; }
.bigs { display: flex; gap: 2px; padding-top: 1px; }
.big {
  flex-direction: column;
  min-width: 33px;
  padding: 12px 3px 4px;
  border: 1px solid #a9bdd6;
  border-radius: 2px;
  background: linear-gradient(#e4edf8 0, #d4e1f2 50%, #c9daef 60%, #cfdef1 100%);
}
.big .pic { width: 24px; height: 20px; margin-bottom: 3px; }
.big .caret { margin-top: auto; }

/* document tabs */
.docs { display: flex; align-items: center; justify-content: space-between; height: 22px; padding: 0 5px 0 3px; background: linear-gradient(90deg, #c9dbf1, #dfeaf8 60%, #ebf3fc); }
.doctab { display: flex; align-items: center; gap: 7px; align-self: flex-end; height: 19px; padding: 0 4px 0 5px; border: 1px solid #9aafc9; border-right-width: 2px; border-bottom: 0; background: #cdddf1; color: #1d2c4e; }
.sq { width: 13px; height: 13px; justify-content: center; border: 1px solid #9db4cf; border-radius: 2px; background: #e9f1fa; }
.sq svg { width: 9px; height: 9px; }

/* work area */
.work { flex: 1; display: flex; min-height: 0; background: #f3f3f3; }
.viewport { flex: 1; display: grid; grid-template-columns: 1fr 14px; grid-template-rows: 1fr 15px; min-width: 0; }
.canvas { background: #fff; min-height: 0; }
.canvas svg { width: 100%; height: 100%; }
.vscroll { display: flex; align-items: center; justify-content: center; background: #f0f0f0; }
.vscroll i { width: 2px; height: 14px; background: #868686; }
.sheet { display: flex; align-items: center; background: linear-gradient(90deg, #c6d9f1, #e4eefa); }
.modeltab { display: grid; margin-left: 5px; }
.modeltab > * { grid-area: 1 / 1; justify-self: center; }
.modeltab svg { width: 46px; height: 13px; }
.modeltab button { height: 12px; }
.sheet .sq { width: 12px; height: 12px; margin-left: auto; }
.grip { width: 2px; height: 13px; margin: 0 3px 0 6px; background: repeating-linear-gradient(#6f7f93 0, #6f7f93 1px, transparent 1px, transparent 3px); }
.hscroll { display: flex; align-items: center; justify-content: center; width: 145px; height: 15px; background: #f0f0f0; }
.hscroll i { width: 14px; height: 1px; background: #777; }
.corner { background: linear-gradient(90deg, #c6d9f1, #dfeaf8); }

/* structure panel */
.side { display: flex; flex-direction: column; width: 239px; padding: 0 2px; background: #f5f5f5; }
.side header { display: flex; align-items: center; height: 16px; padding: 0; background: linear-gradient(#eaf2fc, #c7d9f0); }
.side header h2 { flex: 1; color: #111; margin-left: 4px; }
.dna { width: 14px; height: 12px; }
.side header button svg { width: 9px; height: 9px; }
.sidetools { display: flex; align-items: center; gap: 7px; height: 23px; padding-left: 2px; }
.sidetools svg { width: 12px; height: 12px; }
.sidetools .s13 { width: 14px; height: 13px; }
.treebox { height: 156px; border: 1px solid #9a9a9a; border-right-color: #c4c4c4; outline: 1px solid #dcdcdc; margin-left: 1px; display: flex; flex-direction: column; background: #fff; }
.crumbs { display: flex; height: 16px; background: linear-gradient(#dce9f8, #b7cfec); border: 1px solid #9ab5d8; color: #274a86; }
.crumbs button { width: 40px; padding-left: 5px; border-right: 1px solid #cfdff2; }
.crumbs button:last-child { width: 32px; }
.treewrap { flex: 1; display: flex; min-height: 0; overflow: hidden; }
.tree { flex: 1; display: grid; grid-auto-rows: 1fr; height: 145px; padding-top: 1px; list-style: none; background: linear-gradient(#c9c9c9, #c9c9c9) 38px 0 / 1px 58px no-repeat; }
.tree li { display: flex; align-items: center; padding-left: 34px; }
.tree .l1 { padding-left: 48px; }
.tree .l2 { padding-left: 62px; }
.tree .l3 { padding-left: 77px; }
.ch { width: 8px; height: 8px; margin-right: 7px; }
.tree label { display: flex; align-items: center; gap: 4px; }
.tree input {
  appearance: none;
  width: 11px;
  height: 11px;
  border-radius: 2px;
  background: #0a62bd url("data:image/svg+xml,%3Csvg xmlns='http://www.w3.org/2000/svg' viewBox='0 0 11 11'%3E%3Cpath d='M3 5.500l2 2 3.500-3.500' fill='none' stroke='white'/%3E%3C/svg%3E");
}
.ti { width: 13px; height: 12px; }
.tree span { padding: 0 3px; }
.tree .sel { background: #d9d9d9; margin-left: -2px; }
.treescroll { width: 14px; background: #f2f2f2; padding: 72px 0 0 5px; }
.treescroll i { width: 2px; height: 37px; background: #868686; }

.props { flex: 1; display: flex; flex-direction: column; justify-content: space-between; margin: 4px 0 1px 1px; border: 1px solid #9a9a9a; outline: 1px solid #dcdcdc; background: #fff; }
.props table { border-collapse: collapse; table-layout: fixed; width: 100%; }
.props th { height: 22px; padding: 2px 0 0 7px; text-align: left; font-weight: 400; }
.props th:first-child { width: 115px; border-right: 1px solid #e2e2e2; }
.props td { height: 15px; padding: 0 0 0 7px; line-height: 15px; white-space: nowrap; }
.props td + td, .props th + th { padding-left: 6px; }
.props input { width: 100%; height: 20px; padding: 0 2px; border: 0; border-top: 1px solid #8a8a8a; background: #fff; }
.props input::placeholder { color: #6d6d6d; opacity: 1; }

/* status bar */
.status { display: flex; align-items: center; height: 19px; border-top: 2px solid #8197b3; background: linear-gradient(#e9f2fc, #c2d6f0); color: #1f3a6e; font-size: 10px; }
.sfile { width: 108px; padding-left: 5px; }
.scount { width: 77px; padding-left: 4px; border-left: 1px solid #e9f2fb; }
.sicons { display: flex; width: 146px; padding-left: 4px; gap: 6px; border-left: 1px solid #e9f2fb; }
.sicons svg { width: 12px; height: 12px; fill: none; stroke: #8e8e8e; }
.letter { width: 12px; justify-content: center; font: bold 12px/12px "Liberation Serif", serif; color: #8a8a8a; }
.coords { flex: 1; padding-left: 2px; }
.cell { width: 97px; height: 15px; border-left: 1px solid #e9f2fb; }
.last { width: 79px; }
```
